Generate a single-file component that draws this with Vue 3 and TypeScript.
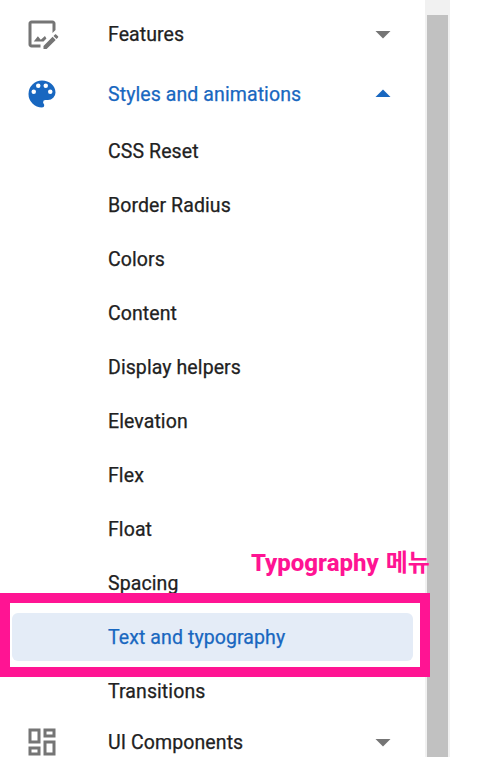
<script setup lang="ts">
interface Section {
  title: string
  icon: string
  open?: boolean
  children?: string[]
}

const activePage = 'Text and typography'

const sections: Section[] = [
  {
    title: 'Features',
    icon: 'M22.7 14.3L21.7 15.3L19.65 13.25L20.65 12.25C20.86 12.04 21.21 12.04 21.42 12.25L22.7 13.53C22.91 13.74 22.91 14.09 22.7 14.3M13 19.94V22H15.06L21.12 15.93L19.07 13.88L13 19.94M11.21 15.83L9.25 13.47L6.5 17H13.03L14.96 15.07L13.96 13.29L11.21 15.83M11 19.9V19.05L11.05 19H5V5H19V11.31L21 9.38V5C21 3.9 20.11 3 19 3H5C3.9 3 3 3.9 3 5V19C3 20.11 3.9 21 5 21H11V19.9Z',
  },
  {
    title: 'Styles and animations',
    icon: 'M17.5 12A1.5 1.5 0 0 1 16 10.5A1.5 1.5 0 0 1 17.5 9A1.5 1.5 0 0 1 19 10.5A1.5 1.5 0 0 1 17.5 12M14.5 8A1.5 1.5 0 0 1 13 6.5A1.5 1.5 0 0 1 14.5 5A1.5 1.5 0 0 1 16 6.5A1.5 1.5 0 0 1 14.5 8M9.5 8A1.5 1.5 0 0 1 8 6.5A1.5 1.5 0 0 1 9.5 5A1.5 1.5 0 0 1 11 6.5A1.5 1.5 0 0 1 9.5 8M6.5 12A1.5 1.5 0 0 1 5 10.5A1.5 1.5 0 0 1 6.5 9A1.5 1.5 0 0 1 8 10.5A1.5 1.5 0 0 1 6.5 12M12 3A9 9 0 0 0 3 12A9 9 0 0 0 12 21A1.5 1.5 0 0 0 13.5 19.5C13.5 19.11 13.35 18.76 13.11 18.5C12.88 18.23 12.73 17.88 12.73 17.5A1.5 1.5 0 0 1 14.23 16H16A5 5 0 0 0 21 11C21 6.58 16.97 3 12 3Z',
    open: true,
    children: [
      'CSS Reset',
      'Border Radius',
      'Colors',
      'Content',
      'Display helpers',
      'Elevation',
      'Flex',
      'Float',
      'Spacing',
      'Text and typography',
      'Transitions',
    ],
  },
  {
    title: 'UI Components',
    icon: 'M19 5V7H15V5H19M9 5V11H5V5H9M19 13V19H15V13H19M9 17V19H5V17H9M21 3H13V9H21V3M11 3H3V13H11V3M21 11H13V21H21V11M11 15H3V21H11V15Z',
  },
]
</script>

<template>
  <div class="page">
    <nav class="drawer">
      <section v-for="s in sections" :key="s.title" class="group">
        <div class="header" :class="{ open: s.open }">
          <svg class="icon" viewBox="0 0 24 24"><path :d="s.icon" /></svg>
          <span class="title">{{ s.title }}</span>
          <svg class="icon caret" viewBox="0 0 24 24"><path d="M7 10L12 15L17 10H7Z" /></svg>
        </div>
        <ul v-if="s.children" class="children">
          <li
            v-for="c in s.children"
            :key="c"
            class="item"
            :class="{ active: c === activePage }"
          >
            {{ c }}
          </li>
        </ul>
      </section>
    </nav>
    <div class="scrollbar"><div class="thumb"></div></div>
    <div class="highlight"></div>
    <div class="note">Typography <span class="korean">메뉴</span></div>
  </div>
</template>

<style>
body {
  background: #fff;
  overflow: hidden;
}
</style>

<style scoped>
.page {
  position: relative;
  display: flex;
  width: 495px;
  height: 757px;
  overflow: hidden;
  background: #fff;
  font-family: Roboto, "Noto Sans CJK KR", sans-serif;
}
.drawer {
  width: 425px;
  padding: 10px 12px 0;
  box-sizing: border-box;
  font-size: 19.5px;
  font-weight: 400;
  letter-spacing: 0.09px;
  -webkit-text-stroke: 0.25px currentColor;
  color: #212121;
}
.header {
  display: flex;
  align-items: center;
  height: 48px;
  padding: 0 12px;
}
.group:first-child .header {
  margin-bottom: 12px;
}
.icon {
  flex: none;
  width: 36px;
  height: 36px;
  fill: #757575;
}
.title {
  flex: 1;
  margin-left: 48px;
}
.open {
  color: #1867c0;
}
.open .icon {
  fill: #1867c0;
}
.open .caret {
  transform: rotate(180deg);
}
.children {
  list-style: none;
  margin: 0;
  padding: 9px 0 3px;
  display: flex;
  flex-direction: column;
  gap: 6px;
}
.item {
  height: 48px;
  box-sizing: border-box;
  padding-top: 1px;
  line-height: 48px;
  padding-left: 96px;
  border-radius: 6px;
}
.item.active {
  background: #e4ecf7;
  color: #1867c0;
}
.scrollbar {
  width: 25px;
  padding: 15px 2px 0;
  box-sizing: border-box;
  background: #f1f1f1;
}
.thumb {
  width: 21px;
  height: 100%;
  background: #c1c1c1;
}
.highlight {
  position: absolute;
  left: 0;
  top: 593px;
  width: 430px;
  height: 84px;
  box-sizing: border-box;
  border: 10px solid #ff1493;
}
.note {
  position: absolute;
  left: 251px;
  top: 545px;
  line-height: 36px;
  font-size: 24px;
  font-weight: 800;
  color: #ff1493;
  white-space: nowrap;
}
.korean {
  margin-left: 1px;
  font-weight: 700;
}
</style>
